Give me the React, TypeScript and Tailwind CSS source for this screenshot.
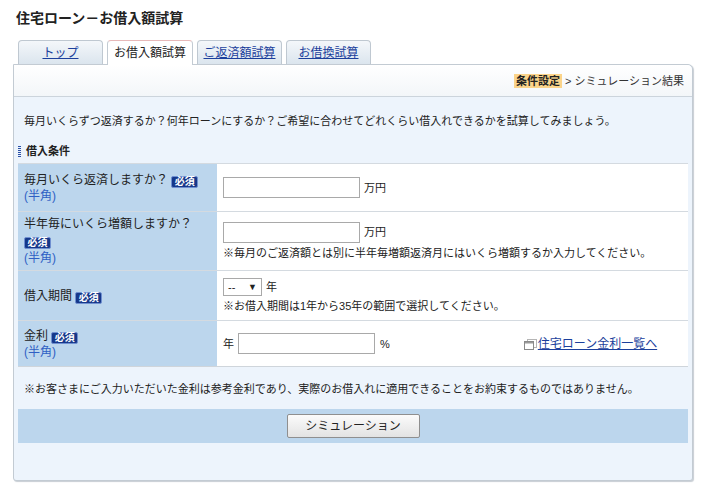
import React from "react";

const font = "font-['Liberation_Sans','Noto_Sans_CJK_JP',sans-serif]";

function Required() {
    return (
        <span className="inline-flex h-[12px] w-[27px] items-center justify-center rounded-[2px] border border-[#6f8fd0] bg-[#16388a] align-[-1px] text-[10px] font-bold leading-none text-white">
            必須
        </span>
    );
}

function Tab({ label, active }: { label: string; active?: boolean }) {
    if (active) {
        return (
            <div className="relative z-10 -mb-px flex h-[25px] w-[86px] items-center justify-center rounded-t-[4px] border border-b-0 border-[#c3cbd3] border-t-[#e7b9b9] bg-white text-[12px] text-[#222]">
                {label}
            </div>
        );
    }
    return (
        <div className="flex h-[24px] w-[85px] items-center justify-center rounded-t-[4px] border border-b-0 border-[#bfc8d1] bg-gradient-to-b from-[#f4f7fa] to-[#dbe5ee] text-[12px]">
            <a href="#" className="text-[#1b3f9c] underline">{label}</a>
        </div>
    );
}

export default function App() {
    return (
        <div className={`h-[495px] w-[701px] bg-white text-[#222] ${font}`}>
            {/* タイトル */}
            <h1 className="pl-[16px] pt-[10px] text-[14px] font-bold leading-[16px] text-[#222]">
                住宅ローン－お借入額試算
            </h1>

            {/* タブ */}
            <div className="mt-[14px] flex items-end gap-[4px] pl-[18px]">
                <Tab label="トップ" />
                <Tab label="お借入額試算" active />
                <Tab label="ご返済額試算" />
                <Tab label="お借換試算" />
            </div>

            {/* パネル */}
            <div className="ml-[13px] h-[417px] w-[680px] rounded-tr-[5px] rounded-b-[3px] border border-[#c3cbd3] bg-[#edf4fc] shadow-[1px_1px_1px_#c8ced4]">
                <div className="flex h-[32px] items-center justify-end rounded-tr-[5px] border-b border-[#ccd4dc] bg-gradient-to-b from-white to-[#f3f6f9] pr-[8px] text-[11px] leading-[14px]">
                    <span className="bg-[#fbd48a] px-[2px] font-bold text-[#222]">条件設定</span>
                    <span className="ml-[3px] text-[#333]">&gt; シミュレーション結果</span>
                </div>

                <p className="mt-[16px] pl-[10px] text-[11px] leading-[16px] text-[#222]">
                    毎月いくらずつ返済するか？何年ローンにするか？ご希望に合わせてどれくらい借入れできるかを試算してみましょう。
                </p>

                {/* 借入条件 */}
                <div className="mt-[14px] flex h-[16px] items-center pl-[4px] text-[11px] font-bold">
                    <span className="mr-[5px] flex h-[11px] w-[3px] flex-col justify-between">
                        <span className="h-[1px] bg-[#2a50a8]" />
                        <span className="h-[1px] bg-[#2a50a8]" />
                        <span className="h-[1px] bg-[#2a50a8]" />
                        <span className="h-[1px] bg-[#2a50a8]" />
                        <span className="h-[1px] bg-[#2a50a8]" />
                        <span className="h-[1px] bg-[#2a50a8]" />
                    </span>
                    借入条件
                </div>

                <div className="ml-[4px] mt-[4px] w-[670px] border-b border-[#cfd5db] text-[12px] leading-[16px]">
                    {/* 毎月 */}
                    <div className="flex h-[48px] border-t border-[#d4dae0]">
                        <div className="flex w-[199px] flex-col justify-center bg-[#bcd6ed] pl-[6px]">
                            <div>毎月いくら返済しますか？ <Required /></div>
                            <div className="text-[#2f5fc4]">(半角)</div>
                        </div>
                        <div className="flex flex-1 items-center bg-white pl-[6px]">
                            <input className="h-[21px] w-[137px] border border-[#a9a9a9] bg-white" />
                            <span className="ml-[4px] text-[11px]">万円</span>
                        </div>
                    </div>

                    {/* 半年毎 */}
                    <div className="flex h-[59px] border-t border-[#d4dae0]">
                        <div className="flex w-[199px] flex-col justify-center bg-[#bcd6ed] pl-[6px] leading-[17px]">
                            <div>半年毎にいくら増額しますか？</div>
                            <div><Required /></div>
                            <div className="text-[#2f5fc4]">(半角)</div>
                        </div>
                        <div className="flex flex-1 flex-col justify-center bg-white pl-[6px]">
                            <div className="flex items-center">
                                <input className="h-[21px] w-[137px] border border-[#a9a9a9] bg-white" />
                                <span className="ml-[4px] text-[11px]">万円</span>
                            </div>
                            <div className="mt-[2px] text-[11px] leading-[16px]">
                                ※毎月のご返済額とは別に半年毎増額返済月にはいくら増額するか入力してください。
                            </div>
                        </div>
                    </div>

                    {/* 借入期間 */}
                    <div className="flex h-[50px] border-t border-[#d4dae0]">
                        <div className="flex w-[199px] items-center bg-[#bcd6ed] pl-[6px]">
                            <span>借入期間 <Required /></span>
                        </div>
                        <div className="flex flex-1 flex-col justify-center bg-white pl-[6px]">
                            <div className="flex items-center">
                                <div className="flex h-[18px] w-[39px] items-center justify-between border border-[#a9a9a9] bg-white px-[4px] text-[11px]">
                                    <span>--</span>
                                    <span className="text-[9px]">▼</span>
                                </div>
                                <span className="ml-[4px] text-[11px]">年</span>
                            </div>
                            <div className="mt-[2px] text-[11px] leading-[16px]">
                                ※お借入期間は1年から35年の範囲で選択してください。
                            </div>
                        </div>
                    </div>

                    {/* 金利 */}
                    <div className="flex h-[46px] border-t border-[#d4dae0]">
                        <div className="flex w-[199px] flex-col justify-center bg-[#bcd6ed] pl-[6px]">
                            <div>金利 <Required /></div>
                            <div className="text-[#2f5fc4]">(半角)</div>
                        </div>
                        <div className="flex flex-1 items-center bg-white pl-[6px] text-[11px]">
                            <span>年</span>
                            <input className="ml-[4px] h-[21px] w-[137px] border border-[#a9a9a9] bg-white" />
                            <span className="ml-[5px]">%</span>
                            <a href="#" className="ml-[134px] flex items-center text-[12px] text-[#1b3f9c] underline">
                                <svg width="13" height="12" viewBox="0 0 13 12" className="mr-[1px]">
                                    <rect x="3.5" y="1.5" width="9" height="8" fill="white" stroke="#b5b5b5" />
                                    <rect x="0.5" y="3.5" width="9" height="8" fill="white" stroke="#8a8a8a" />
                                    <rect x="1" y="4" width="8" height="1.5" fill="#9a9a9a" />
                                </svg>
                                住宅ローン金利一覧へ
                            </a>
                        </div>
                    </div>
                </div>

                <p className="mt-[14px] pl-[10px] text-[11px] leading-[16px]">
                    ※お客さまにご入力いただいた金利は参考金利であり、実際のお借入れに適用できることをお約束するものではありません。
                </p>

                <div className="ml-[4px] mt-[12px] flex h-[34px] w-[670px] items-center justify-center bg-[#bcd6ed]">
                    <button className="h-[24px] w-[133px] rounded-[2px] border border-[#8f8f8f] bg-gradient-to-b from-[#fbfbfb] to-[#e3e3e3] text-[12px] text-[#222]">
                        シミュレーション
                    </button>
                </div>
            </div>
        </div>
    );
}
